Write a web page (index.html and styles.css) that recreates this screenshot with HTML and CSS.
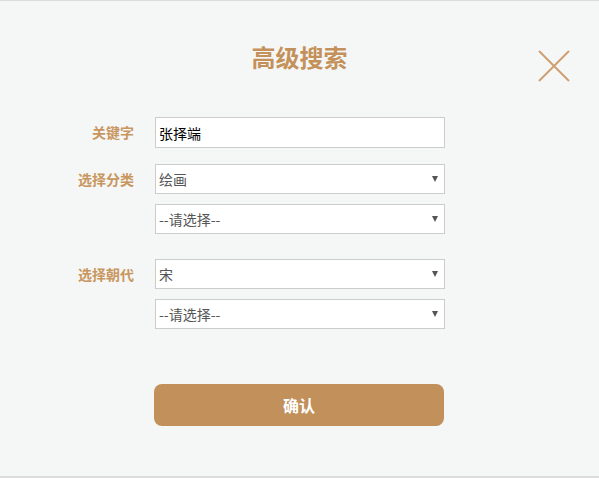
FILE: index.html
```html
<!DOCTYPE html>
<html lang="zh-CN">
<head>
<meta charset="utf-8">
<title>高级搜索</title>
<link rel="stylesheet" href="styles.css">
</head>
<body>
<div class="dialog">
  <h1 class="title">高级搜索</h1>
  <button class="close" type="button" aria-label="关闭">
    <svg width="32" height="32" viewBox="0 0 32 32"><path d="M1 1 L31 31 M31 1 L1 31" stroke="#cf9f72" stroke-width="2" fill="none"/></svg>
  </button>
  <form class="form">
    <label class="label label-input">关键字</label>
    <input class="input" type="text" value="张择端">

    <label class="label">选择分类</label>
    <div class="stack stack-first">
      <div class="select"><span>绘画</span></div>
      <div class="select"><span>--请选择--</span></div>
    </div>

    <label class="label">选择朝代</label>
    <div class="stack">
      <div class="select"><span>宋</span></div>
      <div class="select"><span>--请选择--</span></div>
    </div>

    <span></span>
    <button class="submit" type="button">确认</button>
  </form>
</div>
</body>
</html>
```
FILE: styles.css
```css
* { box-sizing: border-box; }
html, body { margin: 0; padding: 0; }
body {
  background: #f5f7f6;
  font-family: "Noto Sans CJK SC", "Noto Sans", sans-serif;
}
.dialog {
  position: relative;
  height: 478px;
  border-top: 1px solid #dcdcdc;
  border-bottom: 2px solid #dcdcdc;
  background: #f5f7f6;
}
.title {
  margin: 0;
  padding-top: 40px;
  text-align: center;
  font-size: 24px;
  line-height: 32px;
  font-weight: bold;
  color: #c4915a;
}
.close {
  position: absolute;
  left: 538px;
  top: 49px;
  width: 32px;
  height: 32px;
  padding: 0;
  border: 0;
  background: none;
}
.close svg { display: block; }
.form {
  display: grid;
  grid-template-columns: 134px 290px;
  column-gap: 21px;
  row-gap: 16px;
  margin-top: 44px;
  align-items: start;
}
.label {
  text-align: right;
  font-size: 14px;
  font-weight: bold;
  color: #c8965f;
  line-height: 30px;
}
.label-input { line-height: 31px; }
.input {
  display: block;
  width: 290px;
  height: 31px;
  border: 1px solid #cccccc;
  background: #fff;
  padding: 0 3px;
  font-family: inherit;
  font-size: 14px;
  color: #000;
  outline: none;
}
.stack {
  display: flex;
  flex-direction: column;
  gap: 10px;
}
.stack-first { margin-bottom: 9px; }
.select {
  position: relative;
  height: 30px;
  border: 1px solid #cccccc;
  background: #fff;
  padding: 0 3px;
  font-size: 14px;
  line-height: 28px;
  color: #555;
}
.select::after {
  content: "";
  position: absolute;
  right: 6px;
  top: 11px;
  border-left: 3px solid transparent;
  border-right: 3px solid transparent;
  border-top: 6px solid #555;
}
.submit {
  margin-top: 39px;
  margin-left: -1px;
  width: 290px;
  height: 42px;
  border: 0;
  border-radius: 8px;
  background: #c1905b;
  color: #fff;
  font-family: inherit;
  font-size: 16px;
  font-weight: bold;
}
```
